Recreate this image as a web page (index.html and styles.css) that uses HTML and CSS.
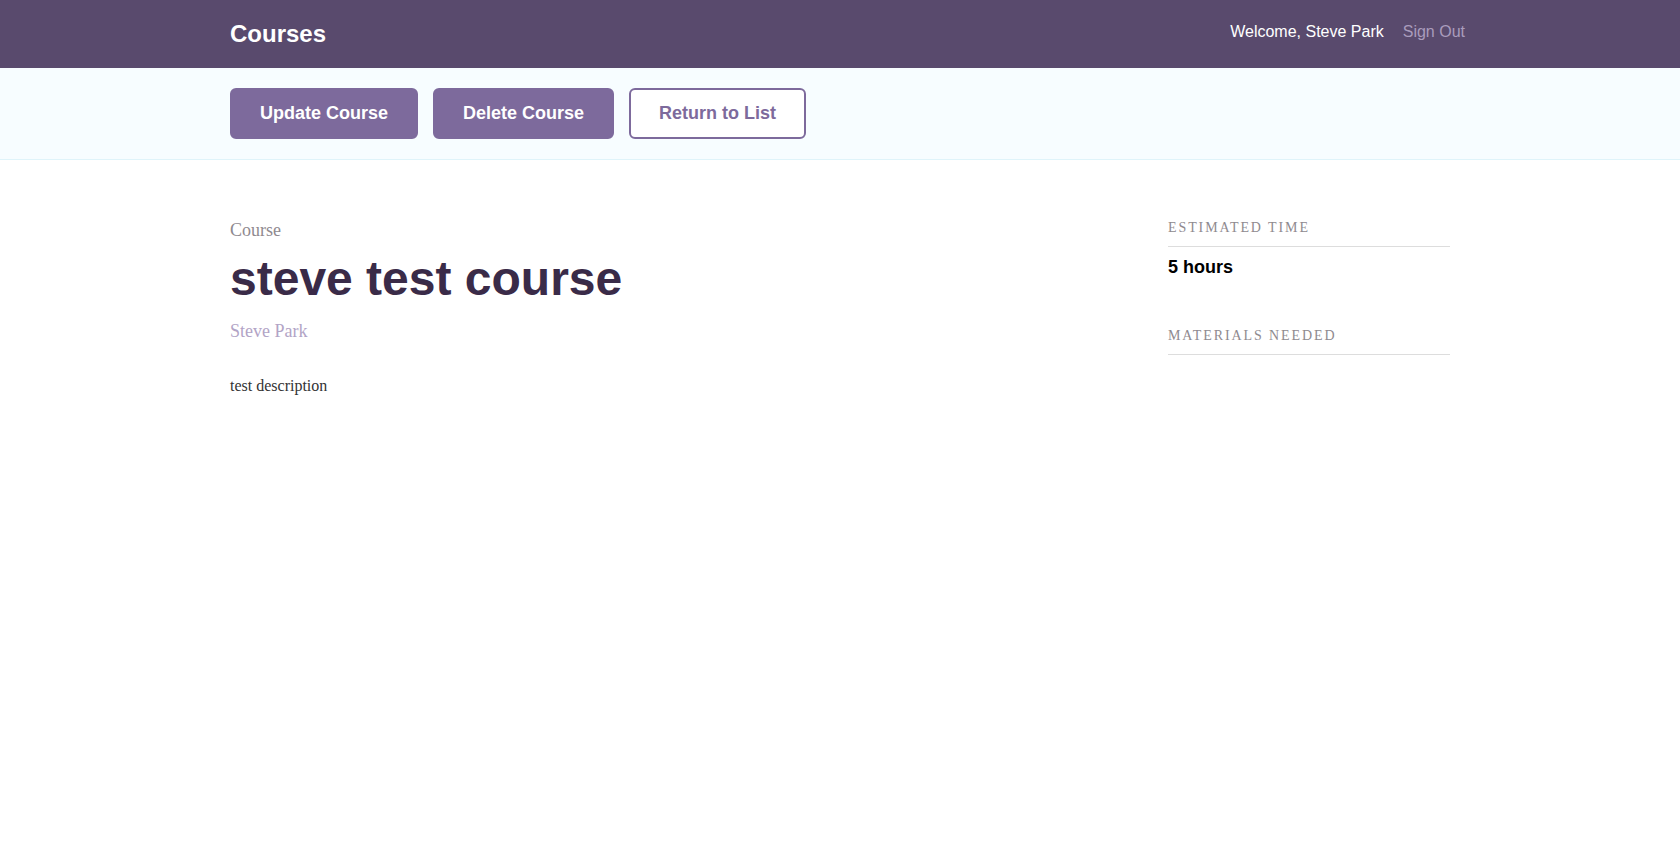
FILE: index.html
```html
<!DOCTYPE html>
<html lang="en">
<head>
<meta charset="utf-8">
<title>Courses</title>
<link rel="stylesheet" href="styles.css">
</head>
<body>
<header class="header">
  <div class="wrap header-inner">
    <h1 class="logo">Courses</h1>
    <nav class="nav">
      <span class="welcome">Welcome, Steve Park</span>
      <a class="signout" href="#">Sign Out</a>
    </nav>
  </div>
</header>
<div class="actions-bar">
  <div class="wrap actions">
    <a class="button" href="#">Update Course</a>
    <a class="button" href="#">Delete Course</a>
    <a class="button button-secondary" href="#">Return to List</a>
  </div>
</div>
<main class="wrap detail">
  <div class="detail-main">
    <h4 class="label">Course</h4>
    <h3 class="title">steve test course</h3>
    <p class="author">Steve Park</p>
    <div class="description">
      <p>test description</p>
    </div>
  </div>
  <aside class="detail-side">
    <ul class="stats">
      <li class="stat">
        <h4 class="stat-title">Estimated Time</h4>
        <h3 class="stat-value">5 hours</h3>
      </li>
      <li class="stat stat-materials">
        <h4 class="stat-title">Materials Needed</h4>
      </li>
    </ul>
  </aside>
</main>
</body>
</html>
```

FILE: styles.css
```css
* { box-sizing: border-box; }

html, body {
  margin: 0;
  padding: 0;
  background: #ffffff;
}

body {
  font-family: "Liberation Serif", "Times New Roman", serif;
  color: #333333;
}

.wrap {
  width: 1220px;
  margin: 0 auto;
}

/* Header */
.header {
  background: #594a6d;
  height: 68px;
}

.header-inner {
  height: 100%;
  display: flex;
  align-items: center;
  justify-content: space-between;
}

.logo {
  margin: 0;
  font-family: "Liberation Sans", Arial, sans-serif;
  font-weight: bold;
  font-size: 24px;
  line-height: 28px;
  color: #ffffff;
}

.nav {
  display: flex;
  align-items: center;
  gap: 19px;
  margin-right: -15px;
  margin-bottom: 4px;
  font-family: "Liberation Sans", Arial, sans-serif;
  font-size: 16px;
  line-height: 18px;
}

.welcome { color: #ffffff; }

.signout {
  color: #a99cbc;
  text-decoration: none;
}

/* Actions bar */
.actions-bar {
  background: #f7fdff;
  border-bottom: 1px solid #dff4fa;
  padding: 20px 0;
}

.actions {
  display: flex;
  gap: 15px;
}

.button {
  display: inline-block;
  height: 51px;
  padding: 0 28px;
  border: 2px solid #7d6a9c;
  border-radius: 6px;
  background: #7d6a9c;
  color: #ffffff;
  font-family: "Liberation Sans", Arial, sans-serif;
  font-weight: bold;
  font-size: 18px;
  line-height: 47px;
  text-decoration: none;
}

.button-secondary {
  background: #ffffff;
  color: #7d6a9c;
}

/* Detail */
.detail {
  display: flex;
  justify-content: space-between;
  padding-top: 58px;
}

.detail-main {
  flex: 1;
  padding-top: 2px;
}

.label {
  margin: 0;
  font-weight: normal;
  font-size: 18px;
  line-height: 20px;
  color: #8f8a8f;
}

.title {
  margin: 11px 0 0;
  font-family: "Liberation Sans", Arial, sans-serif;
  font-weight: bold;
  font-size: 48px;
  line-height: 56px;
  color: #3a2b48;
}

.author {
  margin: 14px 0 0;
  font-size: 18px;
  line-height: 20px;
  color: #b2a4c6;
}

.description {
  margin-top: 36px;
}

.description p {
  margin: 0;
  font-size: 16px;
  line-height: 18px;
  color: #333333;
}

.detail-side {
  width: 282px;
}

.stats {
  list-style: none;
  margin: 0;
  padding: 0;
}

.stat-title {
  margin: 0;
  padding-top: 1px;
  padding-bottom: 9px;
  border-bottom: 1px solid #dddddd;
  font-weight: normal;
  font-size: 14px;
  line-height: 18px;
  text-transform: uppercase;
  letter-spacing: 1.9px;
  color: #8f8a8f;
}

.stat-value {
  margin: 9px 0 0;
  font-family: "Liberation Sans", Arial, sans-serif;
  font-weight: bold;
  font-size: 18px;
  line-height: 22px;
  color: #000000;
}

.stat-materials {
  margin-top: 48px;
}
```
